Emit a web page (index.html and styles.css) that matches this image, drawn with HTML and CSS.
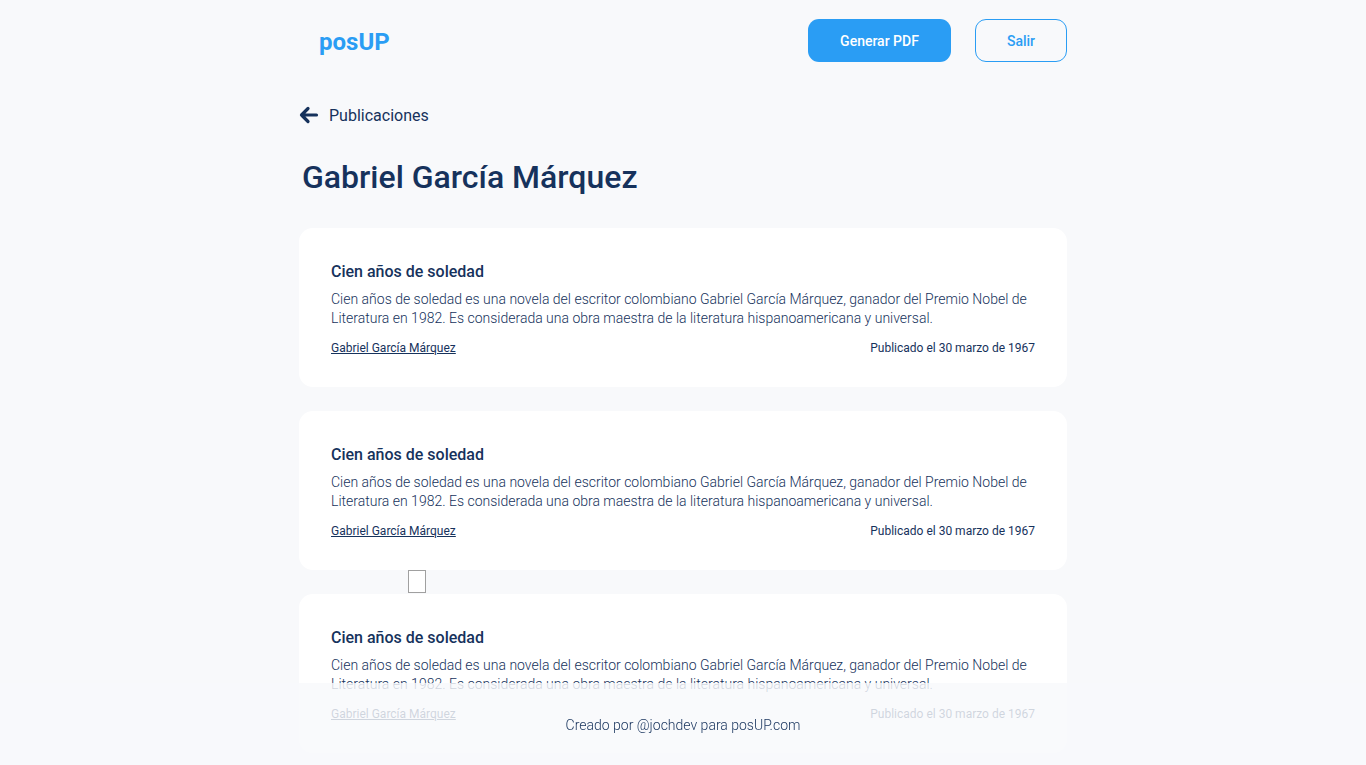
FILE: index.html
```html
<!DOCTYPE html>
<html lang="es">
<head>
<meta charset="utf-8">
<title>posUP</title>
<link rel="stylesheet" href="styles.css">
</head>
<body>
<div class="page">
  <header class="header">
    <div class="logo">posUP</div>
    <div class="actions">
      <button class="btn btn-primary">Generar PDF</button>
      <button class="btn btn-outline">Salir</button>
    </div>
  </header>

  <a class="back" href="#">
    <svg class="back-icon" width="20" height="18" viewBox="0 0 20 18" aria-hidden="true">
      <path d="M17.5 9H2.5M9 2.5L2.5 9L9 15.5" fill="none" stroke="#16325c" stroke-width="3.2" stroke-linecap="round" stroke-linejoin="round"/>
    </svg>
    <span>Publicaciones</span>
  </a>

  <h1 class="title">Gabriel García Márquez</h1>

  <div class="posts">
    <article class="card">
      <h2 class="card-title">Cien años de soledad</h2>
      <p class="card-text">Cien años de soledad es una novela del escritor colombiano Gabriel García Márquez, ganador del Premio Nobel de Literatura en 1982. Es considerada una obra maestra de la literatura hispanoamericana y universal.</p>
      <div class="card-meta">
        <a href="#" class="author">Gabriel García Márquez</a>
        <span class="date">Publicado el 30 marzo de 1967</span>
      </div>
    </article>
    <article class="card">
      <h2 class="card-title">Cien años de soledad</h2>
      <p class="card-text">Cien años de soledad es una novela del escritor colombiano Gabriel García Márquez, ganador del Premio Nobel de Literatura en 1982. Es considerada una obra maestra de la literatura hispanoamericana y universal.</p>
      <div class="card-meta">
        <a href="#" class="author">Gabriel García Márquez</a>
        <span class="date">Publicado el 30 marzo de 1967</span>
      </div>
    </article>
    <div class="placeholder"></div>
    <article class="card">
      <h2 class="card-title">Cien años de soledad</h2>
      <p class="card-text">Cien años de soledad es una novela del escritor colombiano Gabriel García Márquez, ganador del Premio Nobel de Literatura en 1982. Es considerada una obra maestra de la literatura hispanoamericana y universal.</p>
      <div class="card-meta">
        <a href="#" class="author">Gabriel García Márquez</a>
        <span class="date">Publicado el 30 marzo de 1967</span>
      </div>
    </article>
  </div>
</div>
<footer class="footer">Creado por @jochdev para posUP.com</footer>
</body>
</html>
```

FILE: styles.css
```css
* { box-sizing: border-box; }
html, body { margin: 0; padding: 0; }
body {
  background: #f8f9fb;
  font-family: Roboto, "Liberation Sans", sans-serif;
  color: #16325c;
  overflow: hidden;
  height: 765px;
}
.page {
  width: 768px;
  margin: 0 auto;
  padding-top: 19px;
}
.header {
  display: flex;
  align-items: center;
  justify-content: space-between;
  height: 43px;
}
.logo {
  margin-left: 20px;
  font-size: 24px;
  font-weight: 700;
  color: #2a9df4;
  margin-top: 2px;
}
.actions { display: flex; gap: 24px; }
.btn {
  height: 43px;
  border-radius: 11px;
  font-family: Roboto, "Liberation Sans", sans-serif;
  font-size: 14px;
  font-weight: 500;
  cursor: pointer;
}
.btn-primary {
  width: 143px;
  background: #2a9df4;
  color: #fff;
  border: none;
}
.btn-outline {
  width: 92px;
  background: transparent;
  color: #2a9df4;
  border: 1px solid #2a9df4;
}
.back {
  display: flex;
  align-items: center;
  gap: 10px;
  margin-top: 42px;
  color: #16325c;
  text-decoration: none;
  font-size: 16px;
  height: 22px;
}
.back-icon { display: block; }
.title {
  margin: 31px 0 0 3px;
  font-size: 32px;
  font-weight: 500;
  color: #16325c;
  line-height: 40px;
}
.posts {
  position: relative;
  margin-top: 31px;
  display: flex;
  flex-direction: column;
  gap: 24px;
}
.card {
  background: #fff;
  border-radius: 14px;
  padding: 33px 32px 32px;
}
.card-title {
  margin: 0;
  font-size: 16px;
  font-weight: 500;
  line-height: 22px;
  color: #16325c;
}
.card-text {
  margin: 7px 0 0;
  font-size: 14px;
  font-weight: 300;
  line-height: 19px;
  color: #16325c;
}
.card-meta {
  display: flex;
  justify-content: space-between;
  margin-top: 13px;
  font-size: 12px;
  line-height: 14px;
}
.author { color: #16325c; text-decoration: underline; }
.date { color: #16325c; }
.placeholder {
  position: absolute;
  left: 109px;
  top: 342px;
  width: 18px;
  height: 23px;
  border: 1px solid #a0a0a0;
  background: #fff;
}
.footer {
  position: fixed;
  left: 0;
  right: 0;
  bottom: 0;
  height: 82px;
  padding-top: 34px;
  text-align: center;
  font-size: 14px;
  font-weight: 300;
  color: #16325c;
  background: rgba(248, 249, 251, 0.82);
}
```
